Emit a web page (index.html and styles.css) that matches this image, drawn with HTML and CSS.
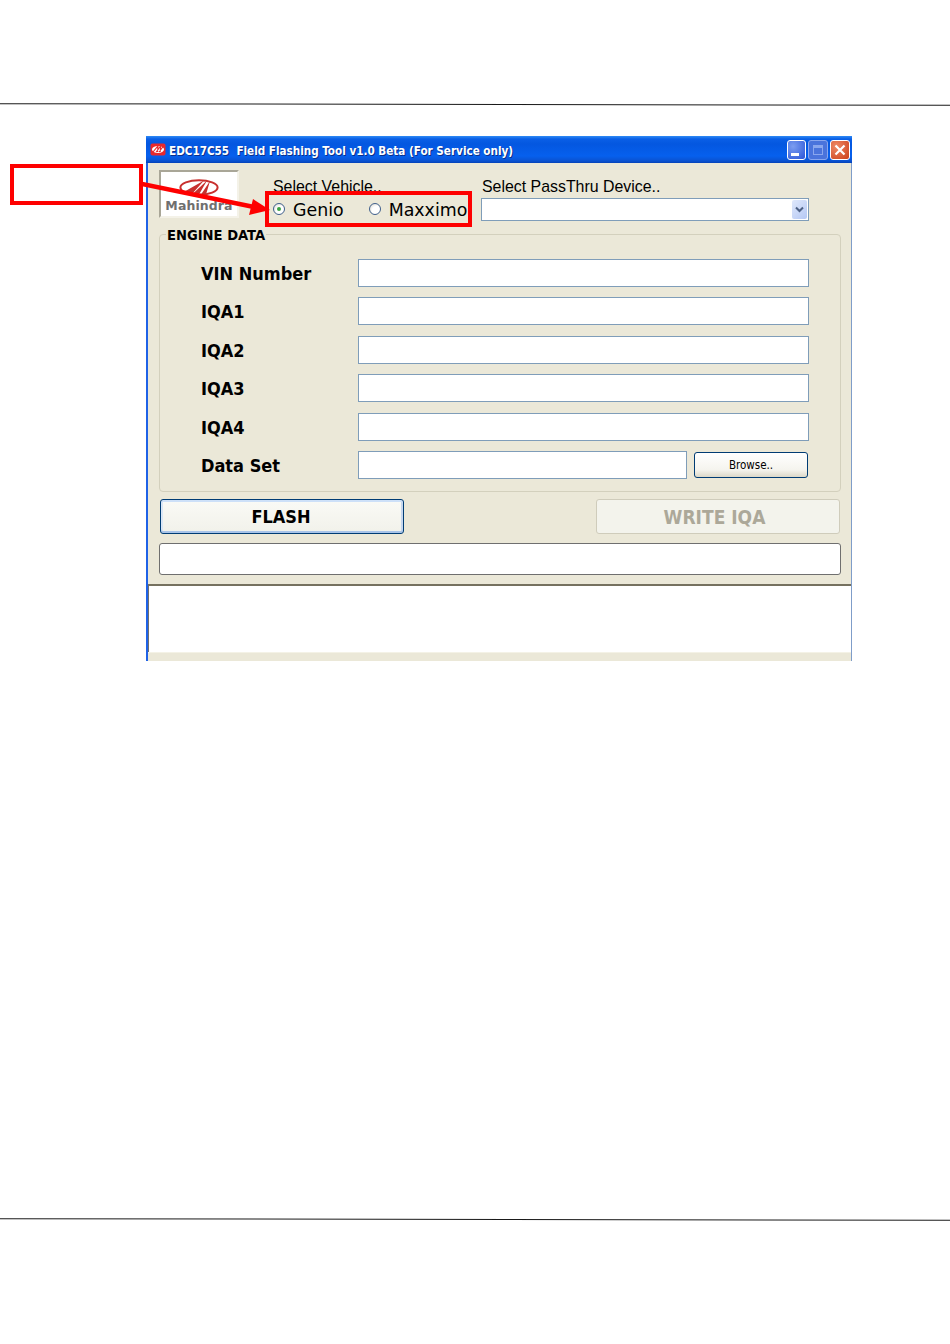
FILE: index.html
```html
<!DOCTYPE html>
<html lang="en">
<head>
<meta charset="utf-8">
<title>EDC17C55 Field Flashing Tool</title>
<link rel="stylesheet" href="styles.css">
</head>
<body>
<main class="page">
  <hr class="rule rule-top">
  <section class="window">
    <header class="titlebar">
      <svg class="app-icon" viewBox="0 0 16 13" aria-hidden="true">
        <rect x="0.5" y="0.5" width="15" height="12" rx="2" fill="#e8292c"/>
        <ellipse cx="8" cy="6.5" rx="6" ry="3.4" fill="#fff"/>
        <path d="M3 9 L8 3 L7.6 9 M6.2 9 L10.6 3 L10.2 9 M9 9 L13 3.6" fill="none" stroke="#e8292c" stroke-width="1.1"/>
      </svg>
      <h1 class="title">EDC17C55&nbsp; Field Flashing Tool v1.0 Beta (For Service only)</h1>
      <div class="controls">
        <span class="ctl ctl-min"><i></i></span>
        <span class="ctl ctl-max"><i></i></span>
        <span class="ctl ctl-close">
          <svg viewBox="0 0 12 12" aria-hidden="true"><path d="M1.5 1.5 L10.5 10.5 M10.5 1.5 L1.5 10.5" stroke="#fff" stroke-width="2.2" fill="none"/></svg>
        </span>
      </div>
    </header>
    <div class="client">
      <div class="top-row">
        <div class="logo">
          <svg class="logo-mark" viewBox="0 0 40 17" aria-hidden="true">
            <ellipse cx="20" cy="8.5" rx="18.6" ry="7.2" fill="none" stroke="#c8302e" stroke-width="2"/>
            <path d="M3 14 L25 1.5 L13 15 Z M13 15.5 L28 1.5 L20 15.5 Z M22 15.5 L31 2 L27 15.5 Z" fill="#c8302e"/>
          </svg>
          <span class="logo-text">Mahindra</span>
        </div>
        <div class="vehicle">
          <div class="caption">Select Vehicle..</div>
          <div class="radios">
            <label class="radio-item"><span class="radio radio-on"></span><span class="radio-text">Genio</span></label>
            <label class="radio-item"><span class="radio"></span><span class="radio-text">Maxximo</span></label>
          </div>
        </div>
        <div class="device">
          <div class="caption">Select PassThru Device..</div>
          <div class="combo">
            <span class="combo-btn">
              <svg viewBox="0 0 9 7" aria-hidden="true"><path d="M1 1.5 L4.5 5 L8 1.5" fill="none" stroke="#4d6185" stroke-width="2"/></svg>
            </span>
          </div>
        </div>
      </div>

      <fieldset class="group">
        <legend class="legend">ENGINE DATA</legend>
        <div class="form-grid">
          <span class="field-label">VIN Number</span><div class="input"></div>
          <span class="field-label">IQA1</span><div class="input"></div>
          <span class="field-label">IQA2</span><div class="input"></div>
          <span class="field-label">IQA3</span><div class="input"></div>
          <span class="field-label">IQA4</span><div class="input"></div>
          <span class="field-label">Data Set</span>
          <div class="file-row">
            <div class="input input-file"></div>
            <button class="btn btn-browse" type="button">Browse..</button>
          </div>
        </div>
      </fieldset>

      <div class="actions">
        <button class="btn btn-main btn-flash" type="button">FLASH</button>
        <button class="btn btn-main btn-disabled" type="button" disabled>WRITE IQA</button>
      </div>
      <div class="status"></div>
    </div>
    <div class="log"></div>
    <div class="foot"></div>
  </section>
  <hr class="rule rule-bottom">

  <div class="callout-box"></div>
  <div class="select-box"></div>
  <svg class="arrow" viewBox="0 0 130 34" aria-hidden="true">
    <path d="M0 3 L112 26" stroke="#fe0000" stroke-width="4.5" fill="none"/>
    <path d="M128 29 L107 34 L111 18 Z" fill="#fe0000"/>
  </svg>
</main>
</body>
</html>
```
FILE: styles.css
```css
* { box-sizing: border-box; }
html, body { margin: 0; padding: 0; background: #fff; }
.page {
  position: relative;
  width: 950px;
  height: 1344px;
  overflow: hidden;
  padding-top: 104px;
  font-family: "Liberation Sans", Arial, sans-serif;
}
.rule { margin: 0; border: 0; height: 1px; background: #1a1a1a; transform: rotate(0.1deg); }
.rule-top { margin-bottom: 31px; }
.rule-bottom { margin-top: 558px; }

.window {
  width: 706px;
  height: 525px;
  margin-left: 146px;
  display: flex;
  flex-direction: column;
  background: #ebe8d8;
  border-left: 2px solid #1f62e6;
  border-right: 1px solid #7f9dc9;
}
.titlebar {
  height: 27px;
  margin-left: -2px;
  margin-right: -1px;
  display: flex;
  align-items: center;
  padding: 0 2px 0 4px;
  background: linear-gradient(#2f8bf5 0, #0a5fe6 3px, #0457e0 8px, #0660ee 20px, #0a52d0 25px, #0442b8 27px);
  flex: none;
}
.app-icon { width: 16px; height: 13px; flex: none; }
.title {
  margin: 2px 0 0 3px;
  flex: 1;
  font-family: "DejaVu Sans", Tahoma, sans-serif;
  font-stretch: condensed;
  font-size: 11.6px;
  font-weight: bold;
  color: #fff;
  text-shadow: 1px 1px 0 #0a2f8a;
  white-space: nowrap;
}
.controls { display: flex; gap: 2px; }
.ctl {
  position: relative;
  width: 20px;
  height: 20px;
  border: 1px solid #fff;
  border-radius: 3px;
  background: radial-gradient(circle at 30% 30%, #7c9df0, #2a55d8);
  display: flex;
  align-items: center;
  justify-content: center;
}
.ctl-min { width: 19px; align-items: flex-end; justify-content: flex-start; padding: 0 0 3px 3px; }
.ctl-min i { display: block; width: 8px; height: 3px; background: #fff; }
.ctl-max { border-color: #8aa6ee; background: #4a73dc; }
.ctl-max i { display: block; width: 10px; height: 10px; border: 1px solid #8aa6ee; border-top-width: 3px; }
.ctl-close { background: radial-gradient(circle at 30% 30%, #ee8a66, #cc3f18); }
.ctl-close svg { width: 12px; height: 12px; }

.client { height: 423px; padding: 7px 10px 0 11px; flex: none; border-bottom: 2px solid #75715f; }
.top-row { display: flex; height: 64px; }
.logo {
  width: 80px;
  height: 48px;
  background: #fff;
  border: 2px solid;
  border-color: #a9a697 #f4f2e8 #f4f2e8 #a9a697;
  display: flex;
  flex-direction: column;
  align-items: center;
}
.logo-mark { width: 40px; height: 17px; margin-top: 7px; flex: none; }
.logo-text {
  font-family: "DejaVu Sans", sans-serif;
  font-weight: bold;
  font-size: 12.5px;
  line-height: 12px;
  letter-spacing: 0.1px;
  color: #6f6f6f;
  margin-top: 4px;
}
.vehicle { margin-left: 34px; width: 208px; }
.caption { font-size: 15.9px; line-height: 16px; color: #000; padding-top: 9px; }
.radios { display: flex; margin-top: 2px; height: 24px; align-items: center; }
.radio-item { display: flex; align-items: center; }
.radio-item + .radio-item { margin-left: 25px; }
.radio {
  width: 12px;
  height: 12px;
  border-radius: 50%;
  border: 1px solid #3f5f8c;
  background: radial-gradient(circle at 65% 65%, #fff 45%, #d5d3c8);
  display: flex;
  align-items: center;
  justify-content: center;
}
.radio-on::after { content: ""; width: 4px; height: 4px; border-radius: 50%; background: #3aa444; }
.radio-text { margin: 2px 0 0 8px; line-height: 24px; color: #000; font-family: "DejaVu Sans", sans-serif; font-size: 17.4px; }
.device { width: 328px; margin-left: 0; }
.device .caption { padding-left: 1px; }
.combo {
  height: 23px;
  margin-top: 3px;
  background: #fff;
  border: 1px solid #7f9db9;
  position: relative;
  display: flex;
  justify-content: flex-end;
  align-items: center;
  padding-right: 1px;
}
.combo-btn {
  width: 15px;
  height: 19px;
  border-radius: 2px;
  background: linear-gradient(135deg, #dfe8fb, #b5c8f4);
  display: flex;
  align-items: center;
  justify-content: center;
}
.combo-btn svg { width: 9px; height: 7px; }

.group {
  margin: -8px 0 0;
  padding: 0 0 0 41px;
  height: 266px;
  border: 1px solid #d3d0bd;
  border-radius: 4px;
  width: 682px;
  position: relative;
}
.legend {
  margin-left: -35px;
  padding: 0 1px;
  font-family: "DejaVu Sans", Tahoma, sans-serif;
  font-stretch: condensed;
  font-weight: bold;
  font-size: 14.6px;
  line-height: 17px;
  color: #000;
}
.form-grid {
  display: grid;
  grid-template-columns: 157px 451px;
  grid-auto-rows: 28px;
  row-gap: 10.4px;
  align-items: center;
  margin-top: 16px;
}
.field-label {
  font-family: "DejaVu Sans", Tahoma, sans-serif;
  font-stretch: condensed;
  font-weight: bold;
  font-size: 18px;
  padding-top: 1px;
  color: #000;
}
.input { height: 28px; background: #fff; border: 1px solid #7f9db9; }
.file-row { display: flex; align-items: center; }
.input-file { width: 329px; }
.btn { padding: 0; margin: 0; cursor: default; }
.btn-browse {
  width: 114px;
  height: 26px;
  margin-left: 7px;
  border: 1px solid #003c74;
  border-radius: 3px;
  background: linear-gradient(#fff, #f5f4ee 70%, #dcd8c8);
  font-family: "DejaVu Sans", Tahoma, sans-serif;
  font-stretch: condensed;
  font-size: 11.5px;
  color: #000;
}
.actions { display: flex; justify-content: space-between; margin-top: 7px; padding: 0 1px; width: 682px; }
.btn-main {
  width: 244px;
  height: 35px;
  border: 1px solid #003c74;
  border-radius: 3px;
  background: linear-gradient(#fafaf6, #f1f1ea);
  box-shadow: inset 0 2px 0 #cde0f8, inset 0 -2px 0 #a9c4e8, inset 2px 0 0 #dbe7f6, inset -2px 0 0 #c6d7ee;
  font-family: "DejaVu Sans", Tahoma, sans-serif;
  font-stretch: condensed;
  font-weight: bold;
  font-size: 18px;
  color: #000;
}
.btn-flash { padding-right: 2px; }
.btn-disabled {
  border-color: #cfccbb;
  background: #f3f3ec;
  box-shadow: none;
  color: #aca899;
  font-size: 19px;
  padding-right: 7px;
}
.status {
  width: 682px;
  height: 32px;
  margin-top: 9px;
  background: #fff;
  border: 1px solid #6f6f6f;
  border-radius: 3px;
}
.log { height: 66px; background: #fff; flex: none; border-left: 1px solid #6f6f6f; }
.foot { flex: 1; border-top: 1px solid #f4f2e6; }

.callout-box {
  position: absolute;
  left: 10px;
  top: 164px;
  width: 133px;
  height: 41px;
  border: 4px solid #fe0000;
}
.select-box {
  position: absolute;
  left: 265px;
  top: 191px;
  width: 207px;
  height: 36px;
  border: 4px solid #fe0000;
}
.arrow {
  position: absolute;
  left: 142px;
  top: 181px;
  width: 130px;
  height: 34px;
}
```
